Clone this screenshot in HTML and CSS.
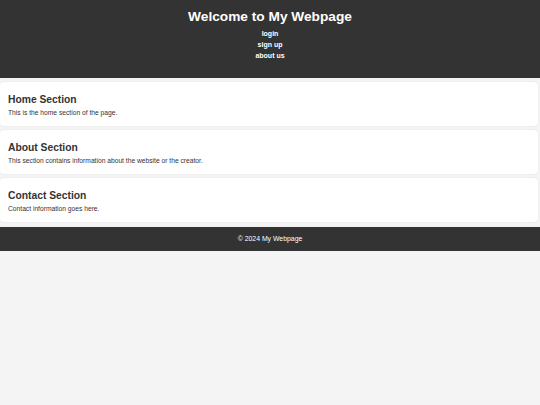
FILE: index.html
```html
<!DOCTYPE html>
<html lang="en">
<head>
<meta charset="utf-8">
<title>My Webpage</title>
<link rel="stylesheet" href="styles.css">
</head>
<body>
<header class="site-header">
  <h1 class="site-title">Welcome to My Webpage</h1>
  <nav>
    <ul class="nav-list">
      <li><a href="#">login</a></li>
      <li><a href="#">sign up</a></li>
      <li><a href="#">about us</a></li>
    </ul>
  </nav>
</header>
<main class="content">
  <section class="card">
    <h2 class="card-title">Home Section</h2>
    <p class="card-text">This is the home section of the page.</p>
  </section>
  <section class="card">
    <h2 class="card-title">About Section</h2>
    <p class="card-text">This section contains information about the website or the creator.</p>
  </section>
  <section class="card">
    <h2 class="card-title">Contact Section</h2>
    <p class="card-text">Contact information goes here.</p>
  </section>
</main>
<footer class="site-footer">
  <p>&copy; 2024 My Webpage</p>
</footer>
</body>
</html>
```
FILE: styles.css
```css
html, body {
  margin: 0;
  padding: 0;
}
body {
  background: #f4f4f4;
  font-family: "Liberation Sans", Arial, sans-serif;
  color: #333;
}
.site-header {
  background: #333;
  color: #fff;
  text-align: center;
  padding: 9px 0 17px;
}
.site-title {
  margin: 0 0 3px;
  font-size: 13.7px;
  line-height: 16px;
  font-weight: bold;
}
.nav-list {
  list-style: none;
  margin: 0;
  padding: 0;
}
.nav-list li {
  line-height: 11px;
  font-size: 7px;
}
.nav-list a {
  color: #fff;
  font-weight: bold;
  text-decoration: none;
}
.content {
  padding: 4px 0 0;
}
.card {
  background: #fff;
  border-radius: 4px;
  margin: 0 2px 4px 0;
  padding: 11px 8px 8px;
  box-shadow: 0 0 2px rgba(0,0,0,0.08);
}
.card-title {
  margin: 0 0 2px;
  font-size: 10.3px;
  line-height: 13px;
  font-weight: bold;
  color: #333;
}
.card-text {
  margin: 0;
  font-size: 6.7px;
  line-height: 10px;
  color: #333;
}
.site-footer {
  background: #333;
  color: #fff;
  text-align: center;
  margin-top: 5px;
  padding: 7px 0;
}
.site-footer p {
  margin: 0;
  font-size: 6.9px;
  line-height: 10px;
}
```
